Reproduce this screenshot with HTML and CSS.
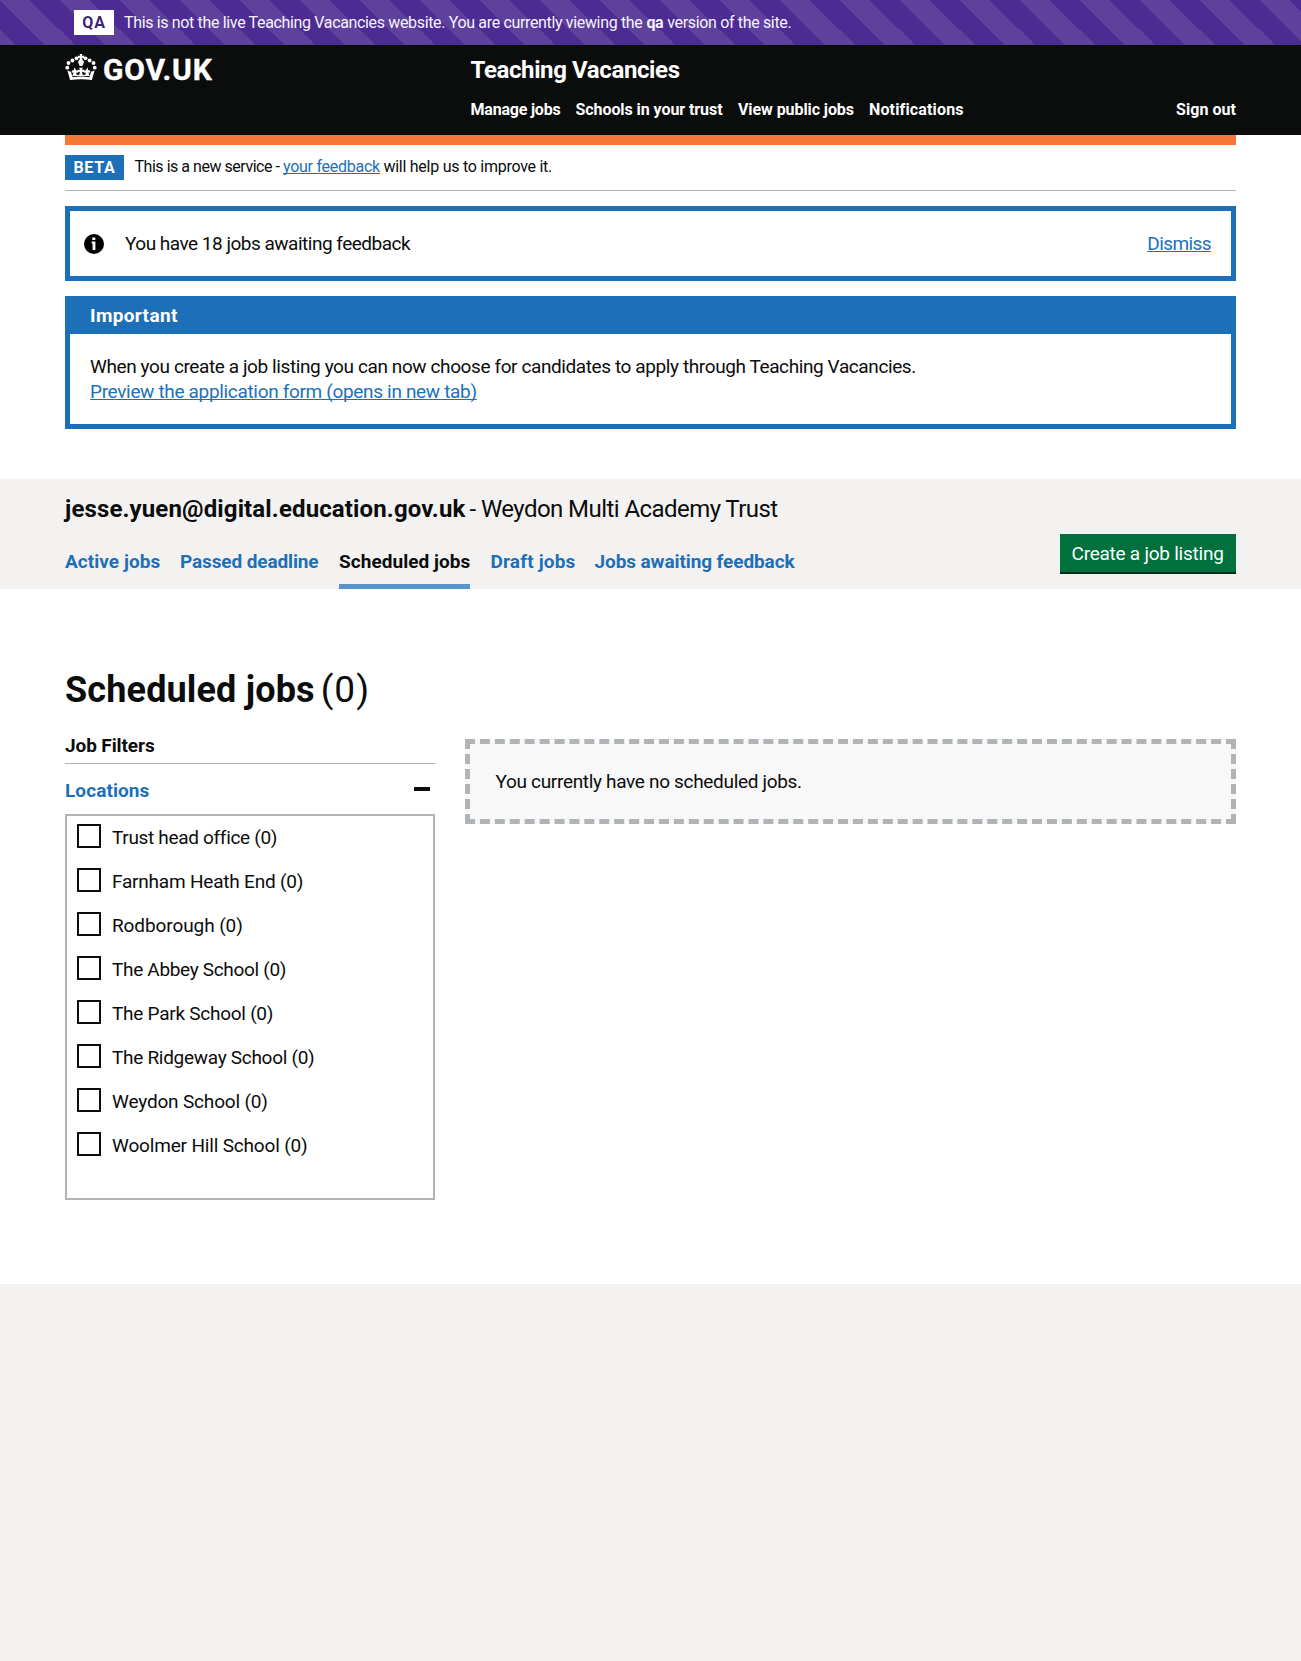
FILE: index.html
```
<!DOCTYPE html>
<html lang="en">
<head>
<meta charset="utf-8">
<title>Scheduled jobs - Teaching Vacancies</title>
<link rel="stylesheet" href="styles.css">
</head>
<body>
<div class="env-banner">
  <strong class="env-tag">QA</strong>
  <span class="env-text"><span>This is not the live Teaching Vacancies website. You are currently viewing the</span><b>qa</b><span>version of the site.</span></span>
</div>
<header class="header">
  <div class="container header-inner">
    <a class="logo">
      <svg class="crown" viewBox="0 0 120 97" aria-hidden="true">
        <g fill="#fff">
          <circle cx="43" cy="16" r="7.2"/><circle cx="27.7" cy="24" r="7.2"/><circle cx="13" cy="33.5" r="7.2"/><circle cx="8.5" cy="51" r="7.2"/>
          <circle cx="77" cy="16" r="7.2"/><circle cx="92.3" cy="24" r="7.2"/><circle cx="107" cy="33.5" r="7.2"/><circle cx="111.5" cy="51" r="7.2"/>
          <path d="M55 0h10l-1.500 7 8.500-1.500v10l-8-1.500 2 9q8 4 3 12l-4 10H55l-4-10q-5-8 3-12l2-9-8 1.500v-10l8.500 1.500z"/>
          <path d="M9 62l13 4 7 21q31-5 62 0l7-21 13-4-10 35q-41-6-82 0z"/>
          <path d="M53 51h14l-3 9 9-2v10l-9-2 3 14H53l3-14-9 2V58l9 2z"/>
          <path d="M36 49l5 11 9 4-3 7-5-2 2 10H29l3-10-6 1-1-7 8-3zM84 49l-5 11-9 4 3 7 5-2-2 10h15l-3-10 6 1 1-7-8-3z"/>
          <path d="M28 78h64v4H28z"/>
        </g>
      </svg>
      <span class="logotype">GOV.UK</span>
    </a>
    <div class="header-content">
      <a class="service">Teaching Vacancies</a>
      <nav class="nav">
        <a class="n1">Manage jobs</a><a class="n2">Schools in your trust</a><a class="n3">View public jobs</a><a class="n4">Notifications</a><a class="signout">Sign out</a>
      </nav>
    </div>
  </div>
</header>
<div class="page">
  <div class="container">
    <div class="orange"></div>
    <div class="phase">
      <strong class="phase-tag">BETA</strong>
      <span class="phase-text"><span class="p1">This is a new service -</span><a class="link p2">your feedback</a><span class="p3">will help us to improve it.</span></span>
    </div>
    <div class="notice">
      <svg class="info" viewBox="0 0 20 20" aria-hidden="true"><circle cx="10" cy="10" r="10" fill="#000"/><path fill="#fff" d="M8.300 3.500h3v2.600h-3zM7.600 7.500h3.800v8.400H8.600V9.400h-1z"/></svg>
      <span class="notice-text">You have 18 jobs awaiting feedback</span>
      <a class="link dismiss">Dismiss</a>
    </div>
    <section class="important">
      <h2>Important</h2>
      <div class="important-body">
        <p>When you create a job listing you can now choose for candidates to apply through Teaching Vacancies.</p>
        <a class="link preview">Preview the application form (opens in new tab)</a>
      </div>
    </section>
  </div>
  <div class="account">
    <div class="container">
      <h2 class="account-title"><b>jesse.yuen@digital.education.gov.uk</b><span>- Weydon Multi Academy Trust</span></h2>
      <div class="account-row">
        <nav class="tabs">
          <a class="t1">Active jobs</a><a class="t2">Passed deadline</a><a class="t3 current">Scheduled jobs</a><a class="t4">Draft jobs</a><a class="t5">Jobs awaiting feedback</a>
        </nav>
        <a class="button">Create a job listing</a>
      </div>
    </div>
  </div>
  <main class="container main">
    <h1><b>Scheduled jobs</b><span>(0)</span></h1>
    <div class="columns">
      <aside class="filters">
        <h3>Job Filters</h3>
        <div class="locations"><span>Locations</span><i class="minus"></i></div>
        <div class="options">
          <label class="l1"><i class="box"></i><span>Trust head office (0)</span></label>
          <label class="l2"><i class="box"></i><span>Farnham Heath End (0)</span></label>
          <label class="l3"><i class="box"></i><span>Rodborough (0)</span></label>
          <label class="l1"><i class="box"></i><span>The Abbey School (0)</span></label>
          <label class="l6"><i class="box"></i><span>The Park School (0)</span></label>
          <label class="l4"><i class="box"></i><span>The Ridgeway School (0)</span></label>
          <label class="l5"><i class="box"></i><span>Weydon School (0)</span></label>
          <label class="l5"><i class="box"></i><span>Woolmer Hill School (0)</span></label>
        </div>
      </aside>
      <div class="empty">You currently have no scheduled jobs.</div>
    </div>
  </main>
</div>
</body>
</html>
```
FILE: styles.css
```
* { box-sizing: border-box; }
body {
  margin: 0;
  min-height: 1661px;
  background: #f3f2f1;
  color: #0b0c0c;
  font-family: Roboto, "Liberation Sans", sans-serif;
  font-size: 19px;
  line-height: 25px;
}
h1, h2, h3, p { margin: 0; }
a, span, b, h2, h3, p { white-space: nowrap; }
.container { width: 1171px; margin: 0 auto; }
.link {
  color: #1d70b8;
  text-decoration: underline;
  text-decoration-thickness: 1px;
  text-underline-offset: 1px;
  text-decoration-skip-ink: none;
}

.env-banner {
  height: 45px;
  padding-left: 74px;
  display: flex;
  align-items: center;
  gap: 10px;
  color: #f6f3fa;
  font-size: 16px;
  background: linear-gradient(45deg, #5e419d 25%, #4c2c92 25%, #4c2c92 50%, #5e419d 50%, #5e419d 75%, #4c2c92 75%) 0 0 / 60px 60px;
}
.env-tag {
  width: 40px;
  height: 25px;
  text-align: center;
  background: #fff;
  color: #3d2375;
  letter-spacing: 0.860px;
}
.env-text { display: flex; gap: 4px; letter-spacing: -0.345px; }

.header { height: 90px; background: #0b0c0c; color: #fff; }
.header-inner { display: flex; height: 90px; }
.logo { width: 405.500px; height: 50px; display: flex; align-items: center; }
.crown { width: 32px; height: 26px; margin: -6px 6px 0 0; }
.logotype {
  font-size: 30px;
  font-weight: 700;
  letter-spacing: 0.800px;
  line-height: 50px;
  -webkit-text-stroke: 0.400px #fff;
}
.header-content { flex: 1; font-weight: 700; }
.service { display: block; font-size: 24px; line-height: 50px; letter-spacing: -0.380px; }
.nav { display: flex; font-size: 16px; line-height: 29px; }
.n1 { width: 105px; letter-spacing: -0.210px; }
.n2 { width: 162.500px; letter-spacing: -0.070px; }
.n3 { width: 131px; letter-spacing: -0.080px; }
.n4 { letter-spacing: 0.150px; }
.signout { margin-left: auto; letter-spacing: 0.050px; }

.page { background: #fff; height: 1149px; }
.orange { height: 10px; background: #f47738; }
.phase {
  height: 46px;
  padding: 10px 0;
  display: flex;
  gap: 10.500px;
  border-bottom: 1px solid #b1b4b6;
  font-size: 16px;
}
.phase-tag {
  width: 59px;
  text-align: center;
  color: #fff;
  background: #1d70b8;
  letter-spacing: 0.750px;
}
.phase-text { display: flex; gap: 3.500px; line-height: 23px; }
.p1 { letter-spacing: -0.470px; }
.p2, .p3 { letter-spacing: -0.260px; }

.notice {
  height: 75px;
  margin: 15px 0;
  padding: 0 20px 0 13.500px;
  border: 5px solid #1d70b8;
  display: flex;
  align-items: center;
}
.info { width: 20px; height: 20px; margin-right: 21.500px; }
.notice-text { letter-spacing: -0.500px; }
.dismiss { margin-left: auto; letter-spacing: -0.580px; }
.important { border: 5px solid #1d70b8; border-top: 0; height: 133px; }
.important h2 {
  height: 38px;
  padding-left: 20px;
  background: #1d70b8;
  color: #fff;
  font-size: 19px;
  line-height: 40px;
  letter-spacing: 0.350px;
}
.important-body { padding: 20px; }
.important-body p { letter-spacing: -0.400px; }
.preview { letter-spacing: -0.330px; }

.account { height: 110px; margin-top: 50px; background: #f3f2f1; }
.account-title {
  display: flex;
  gap: 4px;
  padding-top: 15px;
  font-size: 24px;
  font-weight: 400;
  line-height: 30px;
}
.account-title b { letter-spacing: 0.130px; }
.account-title span { letter-spacing: -0.560px; }
.account-row { display: flex; justify-content: space-between; height: 65px; }
.tabs { display: flex; gap: 20px; font-weight: 700; color: #1d70b8; }
.tabs a { padding-top: 25px; border-bottom: 5px solid transparent; line-height: 25px; }
.t1 { width: 95px; letter-spacing: 0.050px; }
.t2 { width: 139px; letter-spacing: -0.120px; }
.t3 { width: 131px; letter-spacing: 0.050px; }
.t4 { width: 84.500px; padding-left: 0.500px; letter-spacing: 0.180px; }
.t5 { letter-spacing: -0.100px; }
.tabs .current { color: #0b0c0c; border-color: #5694ca; }
.button {
  width: 176px;
  height: 38px;
  margin-top: 10px;
  background: #00703c;
  box-shadow: 0 2px 0 #002d18;
  color: #fff;
  line-height: 40px;
  padding-left: 11.500px;
  letter-spacing: -0.240px;
}

.main { padding-top: 75px; }
h1 { display: flex; gap: 6px; height: 50px; font-size: 36px; line-height: 52px; font-weight: 400; }
h1 b { letter-spacing: 0.150px; }
h1 span { font-size: 37px; letter-spacing: 1px; }
.columns { display: grid; grid-template-columns: 370px 771px; gap: 30px; padding-top: 19px; align-items: start; }
.filters h3 { height: 31px; border-bottom: 1px solid #b1b4b6; font-size: 19px; letter-spacing: -0.100px; }
.locations {
  display: flex;
  justify-content: space-between;
  align-items: center;
  height: 50px;
  padding-right: 5px;
  color: #1d70b8;
  font-weight: 700;
  letter-spacing: 0.080px;
}
.locations span { padding-top: 3px; }
.minus { width: 16px; height: 4px; background: #0b0c0c; }
.options { height: 386px; border: 2px solid #b1b4b6; padding: 8px 10px 0; }
.options label { display: flex; gap: 11px; height: 44px; }
.options span { padding-top: 1px; }
.box { width: 24px; height: 24px; border: 2px solid #0b0c0c; }
.l1 { letter-spacing: -0.320px; }
.l2 { letter-spacing: -0.210px; }
.l3 { letter-spacing: -0.090px; }
.l4 { letter-spacing: -0.290px; }
.l5 { letter-spacing: -0.170px; }
.l6 { letter-spacing: -0.260px; }
.empty {
  height: 85px;
  margin-top: 6px;
  padding: 25px 25px 25px 25.500px;
  border: 5px dashed #b1b4b6;
  background: #f8f8f8;
  letter-spacing: -0.320px;
}
```
